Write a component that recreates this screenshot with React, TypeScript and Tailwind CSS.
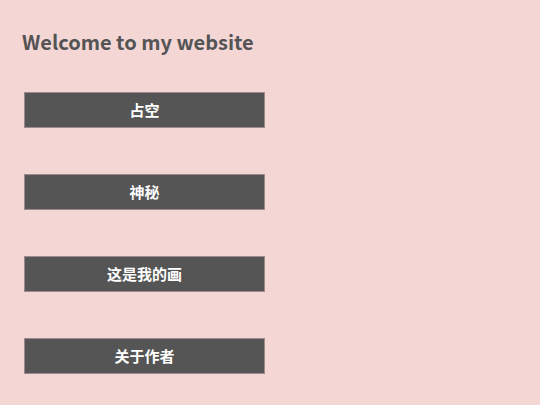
export default function App() {
  const items = ["占空", "神秘", "这是我的画", "关于作者"];
  return (
    <div
      className="w-[540px] h-[405px] bg-[#f4d6d5] overflow-hidden"
      style={{ fontFamily: '"Noto Sans CJK SC", sans-serif' }}
    >
      <h1 className="pt-[28px] pl-[22px] text-[20px] leading-[28px] font-bold text-[#545454]">
        Welcome to my website
      </h1>
      <div className="flex flex-col gap-[46px] pl-[24px] pt-[36px]">
        {items.map((t) => (
          <div
            key={t}
            className="w-[241px] h-[36px] bg-[#555555] border border-[#9a8a8a] flex items-center justify-center text-white text-[15px] font-bold"
          >
            {t}
          </div>
        ))}
      </div>
    </div>
  );
}
